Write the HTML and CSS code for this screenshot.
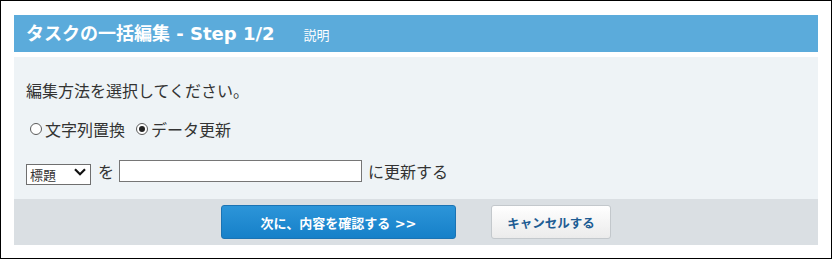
FILE: index.html
```html
<!DOCTYPE html>
<html lang="ja">
<head>
<meta charset="utf-8">
<title>タスクの一括編集</title>
<link rel="stylesheet" href="styles.css">
</head>
<body>
<div class="frame">
  <div class="header">
    <h1 class="title">タスクの一括編集 - Step 1/2</h1>
    <span class="help">説明</span>
  </div>
  <div class="content">
    <div class="row row-text">編集方法を選択してください。</div>
    <div class="row row-radio">
      <label class="radio"><input type="radio" name="mode"><span>文字列置換</span></label>
      <label class="radio"><input type="radio" name="mode" checked><span>データ更新</span></label>
    </div>
    <div class="row row-form">
      <span class="select-wrap">
        <select class="select"><option>標題</option></select>
        <svg class="chev" width="12" height="8" viewBox="0 0 12 8"><path d="M1 1.2 L6 6.2 L11 1.2" fill="none" stroke="#111" stroke-width="2.2"/></svg>
      </span>
      <span class="wo">を</span>
      <input type="text" class="text-input">
      <span class="suffix">に更新する</span>
    </div>
  </div>
  <div class="footer">
    <button class="btn btn-primary">次に、内容を確認する &gt;&gt;</button>
    <button class="btn btn-cancel">キャンセルする</button>
  </div>
</div>
</body>
</html>
```

FILE: styles.css
```css
html, body {
  margin: 0;
  padding: 0;
  background: #fff;
}
body {
  font-family: "Noto Sans CJK JP", "Noto Sans", sans-serif;
  color: #333;
}
.frame {
  box-sizing: border-box;
  width: 832px;
  height: 259px;
  border: 1px solid #000;
  padding: 14px 13px 0 13px;
}
.header {
  height: 37px;
  background: #5babdb;
  display: flex;
  align-items: center;
  padding-left: 12px;
}
.title {
  margin: 0;
  font-family: "DejaVu Sans", "Noto Sans CJK JP", sans-serif;
  font-size: 18px;
  font-weight: bold;
  color: #fff;
  line-height: 1;
}
.help {
  margin-left: 29px;
  font-size: 13px;
  color: #fff;
  line-height: 1;
  padding-top: 2px;
}
.content {
  margin-top: 5px;
  background: #eef3f6;
  padding: 23px 12px 17px 12px;
}
.row {
  font-size: 16px;
}
.row-text {
  line-height: 20px;
  height: 20px;
}
.row-radio {
  margin-top: 19px;
  height: 20px;
  line-height: 20px;
  display: flex;
  align-items: center;
  gap: 7px;
}
.radio {
  display: flex;
  align-items: center;
  gap: 3px;
}
.radio input {
  appearance: none;
  -webkit-appearance: none;
  margin: 0 0 0 4px;
  width: 12px;
  height: 12px;
  border: 1px solid #5b5b5b;
  border-radius: 50%;
  background: #fff;
  box-sizing: border-box;
  position: relative;
}
.radio input:checked::after {
  content: "";
  position: absolute;
  left: 2px;
  top: 2px;
  width: 6px;
  height: 6px;
  border-radius: 50%;
  background: #222;
}
.row-form {
  margin-top: 21px;
  height: 22px;
  display: flex;
  align-items: center;
}
.select-wrap {
  position: relative;
  display: inline-block;
  height: 21px;
}
.select {
  appearance: none;
  -webkit-appearance: none;
  box-sizing: border-box;
  width: 65px;
  height: 21px;
  border: 1px solid #6f6f6f;
  border-radius: 0;
  background: #fff;
  font-family: inherit;
  font-size: 13px;
  color: #333;
  padding: 0 0 0 3px;
  margin: 0;
  line-height: 19px;
}
.chev {
  position: absolute;
  right: 5px;
  top: 7px;
  pointer-events: none;
}
.wo {
  margin-left: 7px;
  margin-right: 5px;
}
.text-input {
  box-sizing: border-box;
  width: 243px;
  height: 22px;
  border: 1px solid #767676;
  background: #fff;
  margin: 0;
  padding: 0 3px;
}
.suffix {
  margin-left: 6px;
}
.footer {
  background: #dadfe3;
  height: 46px;
  display: flex;
  justify-content: center;
  align-items: flex-start;
  gap: 35px;
  padding-top: 6px;
  box-sizing: border-box;
}
.btn {
  box-sizing: border-box;
  height: 34px;
  border-radius: 3px;
  font-family: "DejaVu Sans", "Noto Sans CJK JP", sans-serif;
  font-size: 13px;
  font-weight: bold;
  margin: 0;
  cursor: pointer;
}
.btn-primary {
  width: 235px;
  color: #fff;
  border: 1px solid #1b73b3;
  background: linear-gradient(#2c95d9, #1680c9);
}
.btn-cancel {
  width: 120px;
  color: #1d5c93;
  border: 1px solid #c3c8cc;
  background: linear-gradient(#ffffff, #ebebeb);
  font-size: 12.5px;
}
```
